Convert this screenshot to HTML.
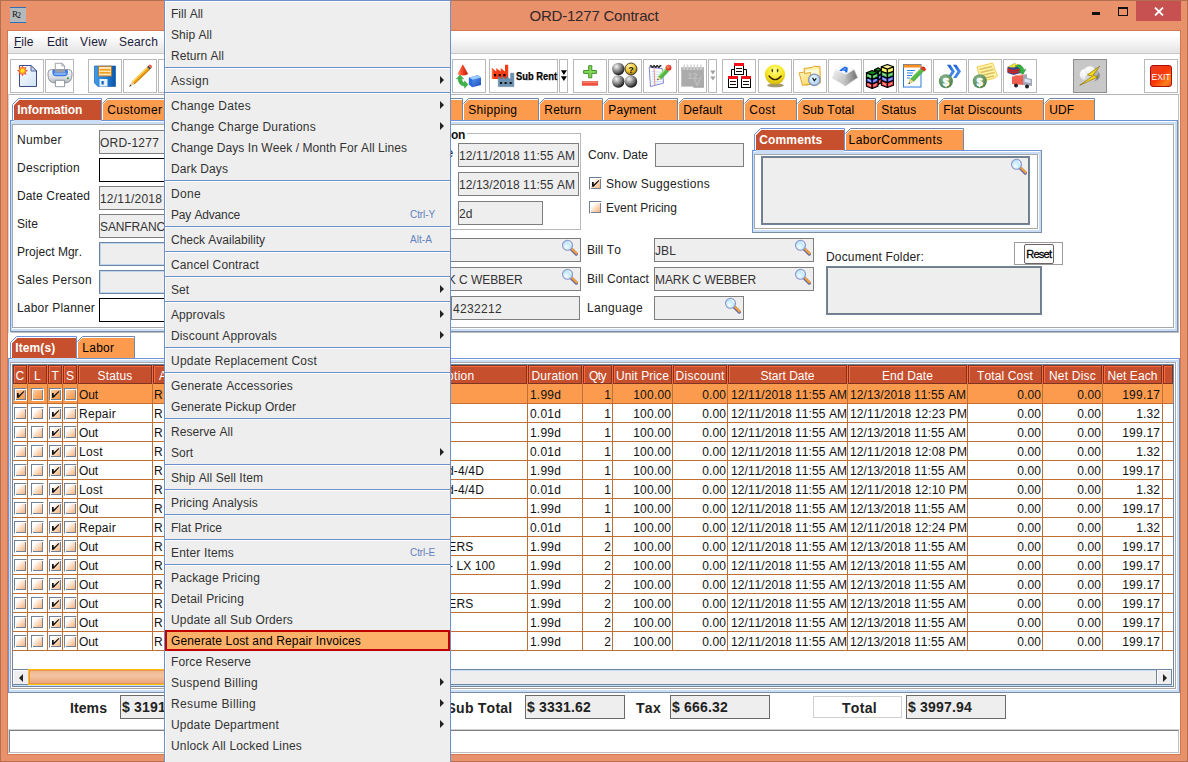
<!DOCTYPE html><html><head><meta charset="utf-8"><title>ORD-1277 Contract</title><style>
*{box-sizing:border-box;margin:0;padding:0}
html,body{width:1188px;height:762px;overflow:hidden}
body{position:relative;background:#E9916B;font:12px "Liberation Sans",sans-serif;font-kerning:none;color:#222}
.a{position:absolute}
.t{position:absolute;white-space:nowrap;line-height:14px;height:14px}
.b{font-weight:bold}
.fld{position:absolute;background:#EEEEEE;border:1px solid #7E7E7E;white-space:nowrap;overflow:hidden;line-height:14px;padding:5px 0 0 0;color:#333}
.fldw{position:absolute;background:#fff;border:1px solid #000}
.fldb{position:absolute;background:#EEEEEE;border:1px solid #6F859F;box-shadow:inset 0 0 0 1px #BDD6EF}
.tb{position:absolute;top:59px;height:34px;background:#fff;border:1px solid #B9B9B9}
.tab{position:absolute;height:21px;top:99px;background:#FB9A50;line-height:14px;padding:4px 0 0 7px;white-space:nowrap;color:#222;border-top:1px solid #B9CBE3;border-right:1px solid #B9CBE3;}
.mi{position:absolute;left:171px;white-space:nowrap;line-height:14px;height:14px;color:#333}
.sep{position:absolute;left:165px;width:285px;height:1px;background:#6F8FCB}
.arr{position:absolute;left:440px;width:0;height:0;border-left:4px solid #222;border-top:4px solid transparent;border-bottom:4px solid transparent}
.acc{position:absolute;font-size:10px;color:#6382BF;white-space:nowrap;line-height:12px}
.th{position:absolute;top:365px;height:19px;background:#C6502E;color:#fff;text-align:center;line-height:14px;padding-top:3px;white-space:nowrap;overflow:hidden;border:1px solid #7E3420;box-shadow:inset 1px 1px 0 #FF6A3C}
.td{position:absolute;white-space:nowrap;line-height:14px;height:14px;color:#111}
.cb{position:absolute;width:13px;height:13px;border:1px solid #6F8199;border-right-color:#fff;border-bottom-color:#fff;box-shadow:inset 1px 1px 0 #fff,inset -1px -1px 0 #6F8199;background:linear-gradient(135deg,#fff 0%,#fff 25%,#FBD5B5 60%,#F4A76C 100%)}
.cb.s{background:linear-gradient(135deg,#FCD8B8 0%,#FBB070 50%,#F58E34 100%)}
</style></head><body>
<div class="a" style="left:0px;top:0px;width:1188px;height:762px;border:1px solid #B46F4F"></div>
<div class="a" style="left:10px;top:7px;width:16px;height:16px;background:#B6B9BC;border-top:1px solid #2F6FB5;border-bottom:1px solid #2F6FB5;font:9px Liberation Serif,serif;line-height:12px;color:#111;padding-left:2px;white-space:nowrap">R<span style="font-size:8px;position:relative;top:1px;left:-1px">2</span></div>
<div class="t" style="left:0px;top:7px;width:1188px;text-align:center;font-size:15px;line-height:18px;height:18px;color:#33282A;letter-spacing:-.2px">ORD-1277 Contract</div>
<div class="a" style="left:1092px;top:12px;width:8px;height:3px;background:#111"></div>
<div class="a" style="left:1118px;top:7px;width:10px;height:9px;border:1px solid #111;border-top:2px solid #111"></div>
<div class="a" style="left:1136px;top:1px;width:45px;height:20px;background:#C75050"></div>
<svg class="a" style="left:1154px;top:7px" width="10" height="9" viewBox="0 0 10 9"><path d="M1 0.5 L9 8.5 M9 0.5 L1 8.5" stroke="#fff" stroke-width="1.8" fill="none"/></svg>
<div class="a" style="left:7px;top:30px;width:1174px;height:725px;background:#D27850"></div>
<div class="a" style="left:8px;top:31px;width:1172px;height:723px;background:#fff"></div>
<div class="a" style="left:8px;top:31px;width:1172px;height:23px;background:linear-gradient(#fff 0%,#fff 20%,#E4E4E4 100%);border-bottom:1px solid #C8C8C8"></div>
<div class="t" style="left:14px;top:35px;color:#1B1B3A"><span style="text-decoration:underline">F</span>ile</div>
<div class="t" style="left:47px;top:35px;letter-spacing:0.081px;color:#1B1B3A">Edit</div>
<div class="t" style="left:80px;top:35px;letter-spacing:0.247px;color:#1B1B3A">View</div>
<div class="t" style="left:119px;top:35px;letter-spacing:0.163px;color:#1B1B3A">Search</div>
<div class="a" style="left:8px;top:54px;width:1172px;height:42px;background:#fff"></div>
<svg width="0" height="0" style="position:absolute"><defs>
<linearGradient id="gPage" x1="0" y1="0" x2="1" y2="1"><stop offset="0" stop-color="#fff"/><stop offset="1" stop-color="#CFE2F7"/></linearGradient>
<radialGradient id="gSun"><stop offset="0" stop-color="#FFE030"/><stop offset=".45" stop-color="#FFB020"/><stop offset=".75" stop-color="#F04030"/><stop offset="1" stop-color="#F04030" stop-opacity="0"/></radialGradient>
<linearGradient id="gFlop" x1="0" y1="0" x2="1" y2="0"><stop offset="0" stop-color="#3C9BE8"/><stop offset=".6" stop-color="#1E78D0"/><stop offset="1" stop-color="#0A56A8"/></linearGradient>
<radialGradient id="gBall" cx=".35" cy=".3" r=".75"><stop offset="0" stop-color="#F4F4F4"/><stop offset=".3" stop-color="#B4B4B4"/><stop offset=".7" stop-color="#5A5A5A"/><stop offset="1" stop-color="#0A0A0A"/></radialGradient>
<radialGradient id="gBallY" cx=".4" cy=".3" r=".8"><stop offset="0" stop-color="#FFF6B0"/><stop offset=".5" stop-color="#F2C530"/><stop offset="1" stop-color="#6A4A00"/></radialGradient>
<radialGradient id="gSmile" cx=".5" cy=".3" r=".78"><stop offset="0" stop-color="#FFFF90"/><stop offset=".55" stop-color="#F6E41C"/><stop offset=".85" stop-color="#D4B80C"/><stop offset="1" stop-color="#7A6000"/></radialGradient>
<radialGradient id="gDol" cx=".4" cy=".3" r=".8"><stop offset="0" stop-color="#8DB58A"/><stop offset="1" stop-color="#3F7A42"/></radialGradient>
<linearGradient id="gExit" x1="0" y1="0" x2="1" y2="1"><stop offset="0" stop-color="#E8402A"/><stop offset=".5" stop-color="#F83808"/><stop offset=".8" stop-color="#FF8018"/><stop offset="1" stop-color="#E84020"/></linearGradient>
<linearGradient id="gCube" x1="0" y1="0" x2="1" y2="1"><stop offset="0" stop-color="#6CB0F8"/><stop offset="1" stop-color="#1848C0"/></linearGradient>
<linearGradient id="gCone" x1="0" y1="0" x2="1" y2="0"><stop offset="0" stop-color="#FF9070"/><stop offset=".5" stop-color="#F04020"/><stop offset="1" stop-color="#C02010"/></linearGradient>
<linearGradient id="gKey" x1="0" y1="0" x2="0" y2="1"><stop offset="0" stop-color="#F4F4F4"/><stop offset="1" stop-color="#B0B0B0"/></linearGradient>
<linearGradient id="gFold" x1="0" y1="0" x2="1" y2="1"><stop offset="0" stop-color="#FFF6C0"/><stop offset="1" stop-color="#F8D258"/></linearGradient>
<linearGradient id="gArr" x1="0" y1="0" x2="1" y2="1"><stop offset="0" stop-color="#1458D8"/><stop offset="1" stop-color="#58A0F4"/></linearGradient>
<linearGradient id="gKeyL" x1="0" y1="0" x2="1" y2="1"><stop offset="0" stop-color="#F2F2F2"/><stop offset="1" stop-color="#B8B8B8"/></linearGradient><linearGradient id="gKeyR" x1="0" y1="0" x2="1" y2="0"><stop offset="0" stop-color="#C4C4C4"/><stop offset="1" stop-color="#6C6C6C"/></linearGradient>
<radialGradient id="gLens" cx=".38" cy=".68" r=".7"><stop offset="0" stop-color="#F4FDFF"/><stop offset=".6" stop-color="#C4EAFB"/><stop offset="1" stop-color="#A8D8F6"/></radialGradient>
<radialGradient id="gEra" cx=".4" cy=".35" r=".7"><stop offset="0" stop-color="#FF8A70"/><stop offset="1" stop-color="#D01808"/></radialGradient>
<radialGradient id="gCloud" cx=".35" cy=".3" r=".8"><stop offset="0" stop-color="#fff"/><stop offset=".6" stop-color="#EFEFEF"/><stop offset="1" stop-color="#C8C8C8"/></radialGradient>
<radialGradient id="gClk" cx=".4" cy=".35" r=".7"><stop offset="0" stop-color="#E8F6FF"/><stop offset="1" stop-color="#A8D0F4"/></radialGradient>
<linearGradient id="gPrn" x1="0" y1="0" x2="0" y2="1"><stop offset="0" stop-color="#F4F6F8"/><stop offset=".6" stop-color="#DADDE2"/><stop offset="1" stop-color="#AEB3BC"/></linearGradient>
<linearGradient id="gPen" x1="0" y1="0" x2="1" y2="1"><stop offset="0" stop-color="#8FE070"/><stop offset="1" stop-color="#209020"/></linearGradient>
</defs></svg>
<div class="tb" style="left:10px;width:34px;background:#fff"></div>
<svg class="a" style="left:10px;top:59px" width="34" height="34" viewBox="0 0 34 34"><path d="M9.500 6.500H21L26.500 12V27.500H9.500Z" fill="url(#gPage)" stroke="#3A4C86" stroke-width="1"/><path d="M21 6.500V12H26.500Z" fill="#C4D8F0" stroke="#3A4C86" stroke-width=".8"/><path d="M18.10 11.80L15.64 13.10L16.46 15.76L13.80 14.94L12.50 17.40L11.20 14.94L8.54 15.76L9.36 13.10L6.90 11.80L9.36 10.50L8.54 7.84L11.20 8.66L12.50 6.20L13.80 8.66L16.46 7.84L15.64 10.50Z" fill="#F0402C" opacity=".9"/><circle cx="12.5" cy="11.8" r="3.3" fill="#FF9820"/><circle cx="12.5" cy="11.8" r="2" fill="#FFE428"/></svg>
<div class="tb" style="left:45px;width:29px;background:#fff"></div>
<svg class="a" style="left:45px;top:59px" width="29" height="34" viewBox="0 0 29 34"><path d="M10.300 12V4.300H16.800L19.600 7V12Z" fill="#fff" stroke="#8A8E96" stroke-width=".8"/><path d="M16.800 4.300V7H19.600Z" fill="#D8DCE2" stroke="#8A8E96" stroke-width=".6"/><path d="M6.500 10.500H23.500Q27 10.500 27 14V16Q27 24 19.500 24H10.500Q3 24 3 16V14Q3 10.500 6.500 10.500Z" fill="url(#gPrn)" stroke="#7C828C" stroke-width=".8"/><path d="M7.400 11H22.900V13.500Q22.900 17.300 19 17.300H11.300Q7.400 17.300 7.400 13.500Z" fill="#3C7CE4"/><path d="M9 13.800H21.300V14.500Q21.300 16 19.500 16H11Q9 16 9 14.500Z" fill="#7FB0F4"/><path d="M10 11H20V13.500H10Z" fill="#9AA0AC"/><path d="M10.400 21.300H19.600V27.700H10.400Z" fill="#fff" stroke="#7C828C" stroke-width=".8"/><circle cx="22.900" cy="19.200" r="1" fill="#22A022"/></svg>
<div class="tb" style="left:88px;width:34px;background:#fff"></div>
<svg class="a" style="left:88px;top:59px" width="34" height="34" viewBox="0 0 34 34"><path d="M6.500 7H27.500V27.5H10L6.500 24Z" fill="url(#gFlop)" stroke="#0C4FA0" stroke-width=".6"/><rect x="10.5" y="7.300" width="13" height="9.700" fill="#FCE6B8" stroke="#B87830" stroke-width="1"/><rect x="11.5" y="10" width="11" height="1.600" fill="#F0A020"/><rect x="11.5" y="13" width="11" height="1.600" fill="#F0A020"/><rect x="11.500" y="20" width="8" height="7.500" fill="#E8F0FA"/><rect x="13.5" y="22" width="2.200" height="3.500" fill="#1060C0"/></svg>
<div class="tb" style="left:123px;width:34px;background:#fff"></div>
<svg class="a" style="left:123px;top:59px" width="34" height="34" viewBox="0 0 34 34"><path d="M11.490 25.270L8.850 22.530L24.080 7.900L26.720 10.640Z" fill="#F5A51A"/><path d="M8.850 22.530L24.080 7.900L25 8.850L9.770 23.480Z" fill="#FFD968"/><path d="M10.700 24.450L25.930 9.820L26.720 10.640L11.490 25.270Z" fill="#D48410"/><path d="M6.200 27.700L8.850 22.530L11.490 25.270Z" fill="#E6CDA6"/><path d="M6.200 27.700L7.300 25.500L8.500 26.700Z" fill="#2A2A2A"/><path d="M24.080 7.900L25.500 6.500L28.140 9.240L26.720 10.640Z" fill="#4A4A4A"/><path d="M25.500 6.500L26.500 5.600Q28.800 5.200 29.300 8.200L28.140 9.240Z" fill="#EE6048"/></svg>
<div class="tb" style="left:158px;width:34px;background:#fff"></div>
<div class="tb" style="left:452px;width:34px;background:#fff"></div>
<svg class="a" style="left:452px;top:59px" width="34" height="34" viewBox="0 0 34 34"><path d="M10.800 5.300L16.200 15Q11 18 5.400 15Z" fill="url(#gCone)"/><path d="M6 19.500Q6 26 12.500 27.300V29.300L16 25.500L12.500 21.800V23.800Q9.500 23 9.800 19.500L11.800 20L8 16L4.200 20Z" fill="#3DB24A" stroke="#2A8A35" stroke-width=".4"/><path d="M16.900 18.500L26 15.900L29 18.500V26L20.500 28.300L16.900 25.500Z" fill="url(#gCube)"/><path d="M16.900 18.500L26 15.900L29 18.500L20.500 20.800Z" fill="#9CCCFF"/><path d="M16.900 18.500L20.500 20.800V28.300L16.900 25.500Z" fill="#2C6CE0"/></svg>
<div class="tb" style="left:489px;width:69px;background:#fff"></div>
<svg class="a" style="left:489px;top:59px" width="69" height="34" viewBox="0 0 69 34"><path d="M2.900 19.900V9L7.300 12.500V9L11.700 12.500V9L16 12.500V5.700H19.200V19.900Z" fill="#F43C14"/><path d="M2.900 19.900V9L4.500 10.300V19.900Z" fill="#FF6A40"/><path d="M5 15h2.100v2.300h-2.100zM9.600 15h2.100v2.300h-2.100zM14.200 15h2.300v2.300h-2.300z" fill="#1A0000"/><path d="M9.300 27.600V17.500L13.400 20.500V17.500L17.500 20.500V17.500L21.600 20.500V14.200H24.800V27.600Z" fill="#6C92B2" stroke="#4F7696" stroke-width=".5"/><path d="M11 23h2.100v2.100h-2.100zM15.600 23h2.100v2.100h-2.100zM20.600 23h2.100v2.100h-2.100z" fill="#0A0A0A"/></svg>
<div class="t b" style="left:515.5px;top:69.300px;font-size:10.5px;color:#000;transform:scaleX(.89);transform-origin:0 0;-webkit-text-stroke:.25px #000">Sub Rent</div>
<div class="tb" style="left:559px;width:9px;background:#fff"></div>
<svg class="a" style="left:559px;top:59px" width="9" height="34" viewBox="0 0 9 34"><path d="M1.900 11.200H7.900L4.900 15.900Z" fill="#000"/><path d="M1.900 17.200H7.900L4.900 21.900Z" fill="#000"/></svg>
<div class="tb" style="left:573px;width:34px;background:#fff"></div>
<svg class="a" style="left:573px;top:59px" width="34" height="34" viewBox="0 0 34 34"><path d="M15.700 6.700H18.800V11.500H23.400V14.400H18.800V18.800H15.700V14.400H10.600V11.500H15.700Z" fill="#86D658" stroke="#2E8B1E" stroke-width=".9"/><rect x="9.200" y="22.500" width="15.600" height="3.800" fill="#F0503C" stroke="#D83828" stroke-width=".5"/><rect x="9.500" y="22.800" width="15" height="1.200" fill="#F8806C"/></svg>
<div class="tb" style="left:608px;width:34px;background:#fff"></div>
<svg class="a" style="left:608px;top:59px" width="34" height="34" viewBox="0 0 34 34"><circle cx="10.300" cy="22.500" r="6.200" fill="url(#gBall)"/><circle cx="23" cy="22.500" r="6.200" fill="url(#gBall)"/><circle cx="10.300" cy="10" r="6.200" fill="url(#gBall)"/><circle cx="23" cy="10" r="6" fill="url(#gBallY)" stroke="#222" stroke-width=".8"/><text x="23" y="13.500" font-family="Liberation Sans,sans-serif" font-size="9" font-weight="bold" text-anchor="middle" fill="#111">?</text></svg>
<div class="tb" style="left:643px;width:34px;background:#fff"></div>
<svg class="a" style="left:643px;top:59px" width="34" height="34" viewBox="0 0 34 34"><path d="M6.200 8.200L19.200 9.600L20.600 24.100L7.500 27.600Z" fill="#fff" stroke="#8484D4" stroke-width="1"/><path d="M8.200 12.500L19.500 13.300M8.400 15L19.800 15.700M8.600 17.500L20 18.100M8.800 20L20.200 20.400M9 22.500L20.300 22.600M9.200 25L16 23.800" stroke="#B4D4F6" stroke-width=".7"/><path d="M11 9L11.900 26.200" stroke="#F08080" stroke-width=".9"/><path d="M7 7.400q.8 -1.600 1.600 0q.8 2 1.600 0q.8 -1.600 1.600 0q.8 2 1.600 0q.8 -1.600 1.600 0q.8 2 1.600 0q.8 -1.600 1.600 0" stroke="#222" stroke-width="1.300" fill="none"/><path d="M14.200 21.300L15.200 17.200L23.300 8.600L26.600 11.800L18.300 20.300Z" fill="url(#gPen)"/><path d="M16.300 16.200L23.800 8.300" stroke="#A8F088" stroke-width="1.300"/><path d="M14.200 21.300L15.200 17.200L18.300 20.300Z" fill="#EED6A6"/><path d="M14.200 21.300L14.600 19.700L15.800 20.800Z" fill="#333"/><path d="M22.600 9.300L23.600 8.300L26.900 11.500L25.900 12.500Z" fill="#F2F2F2"/><circle cx="25.500" cy="8.700" r="2.900" fill="url(#gEra)"/></svg>
<div class="tb" style="left:678px;width:29px;background:#fff"></div>
<svg class="a" style="left:678px;top:59px" width="29" height="34" viewBox="0 0 29 34"><path d="M15.300 16.700H25.900V28.700H15.300Z" fill="#9C9C9C"/><path d="M3.300 8.400H25.900V27.600H3.300Z" fill="#ABABAB"/><path d="M3.300 8.400H25.900V11H3.300Z" fill="#B6B6B6"/><text x="14.800" y="20" font-family="Liberation Sans,sans-serif" font-size="8.500" font-weight="bold" text-anchor="middle" fill="#C2C2C2" letter-spacing=".5">12</text><path d="M6.300 5.900v4.500M9.600 5.900v4.500M12.900 5.900v4.500M16.200 5.900v4.500M19.500 5.900v4.500M22.800 5.900v4.500" stroke="#D2D2D2" stroke-width="1.500" stroke-linecap="round"/><path d="M16.500 20.500L19.300 26.300L23.300 17.500" stroke="#BDBDBD" stroke-width="1.500" fill="none"/></svg>
<div class="tb" style="left:708px;width:9px;background:#fff"></div>
<svg class="a" style="left:708px;top:59px" width="9" height="34" viewBox="0 0 9 34"><path d="M2.200 11.400H7.600L4.900 15.600Z" fill="#A0A0A0"/><path d="M2.200 17.400H7.600L4.900 21.600Z" fill="#A0A0A0"/></svg>
<div class="tb" style="left:722px;width:34px;background:#fff"></div>
<svg class="a" style="left:722px;top:59px" width="34" height="34" viewBox="0 0 34 34"><path d="M9.500 17.500V10.500H24.500V17.500" stroke="#000" stroke-width="1" fill="none"/><rect x="12.5" y="4.5" width="9" height="11" fill="#fff" stroke="#000" stroke-width="1"/><rect x="12.0" y="4.0" width="10" height="3" fill="#F0101C"/><path d="M14.0 9.5h6M14.0 12.5h6" stroke="#1A0A0A" stroke-width="1"/><rect x="6.5" y="17.5" width="9" height="11" fill="#fff" stroke="#000" stroke-width="1"/><rect x="6.0" y="17.0" width="10" height="3" fill="#F0101C"/><path d="M8.0 22.5h6M8.0 25.5h6" stroke="#1A0A0A" stroke-width="1"/><rect x="19.5" y="17.5" width="9" height="11" fill="#fff" stroke="#000" stroke-width="1"/><rect x="19.0" y="17.0" width="10" height="3" fill="#F0101C"/><path d="M21.0 22.5h6M21.0 25.5h6" stroke="#1A0A0A" stroke-width="1"/></svg>
<div class="tb" style="left:758px;width:34px;background:#fff"></div>
<svg class="a" style="left:758px;top:59px" width="34" height="34" viewBox="0 0 34 34"><ellipse cx="17.500" cy="26.300" rx="8.500" ry="2" fill="#5A4400" opacity=".55"/><circle cx="17" cy="15.600" r="10.100" fill="url(#gSmile)"/><ellipse cx="14.300" cy="11.600" rx=".8" ry="1.800" fill="#4A4000"/><ellipse cx="19.600" cy="11.600" rx=".8" ry="1.800" fill="#4A4000"/><path d="M11 17Q17.100 24.300 23.200 17" stroke="#3A2400" stroke-width="1.300" fill="none" stroke-linecap="round"/></svg>
<div class="tb" style="left:793px;width:34px;background:#fff"></div>
<svg class="a" style="left:793px;top:59px" width="34" height="34" viewBox="0 0 34 34"><path d="M11 9.500L19.500 8.300L20.500 7.200L27 7.600L27.400 24L12.500 26Z" fill="#FFEFA0" stroke="#E09A20" stroke-width=".9" stroke-linejoin="round"/><path d="M13 11L25.500 10L26 23L14 24.500Z" fill="#FFFBDC"/><path d="M6.200 13.800L10.500 13.200L12 14.500L17.500 13.500L19 25L9.400 26.300Z" fill="url(#gFold)" stroke="#E09A20" stroke-width=".9" stroke-linejoin="round"/><circle cx="21.300" cy="20.800" r="5.700" fill="url(#gClk)" stroke="#8494B8" stroke-width="1.300"/><path d="M19.600 18.900L21.300 21.700L23.300 19.400" stroke="#101018" stroke-width="1.200" fill="none"/></svg>
<div class="tb" style="left:828px;width:34px;background:#fff"></div>
<svg class="a" style="left:828px;top:59px" width="34" height="34" viewBox="0 0 34 34"><path d="M7.700 10.900L18.300 15L17.100 26.800L4.400 19.200Z" fill="url(#gKeyL)" stroke="#E4E4E4" stroke-width=".8" stroke-linejoin="round"/><path d="M18.300 15L25.900 10.500L29.500 18.600L17.100 26.800Z" fill="url(#gKeyR)" stroke="#B0B0B0" stroke-width=".8" stroke-linejoin="round"/><path d="M7.700 10.900L15.600 6.900L25.900 10.500L18.300 15Z" fill="#FBFBFB" stroke="#F0F0F0" stroke-width=".8" stroke-linejoin="round"/><path d="M11 11.400L16.800 7.600L19.800 8.800L19.300 13.600L16.900 13.200L17.200 11.900L14.600 11.500L13.300 12.200Z" fill="#1E6AE8"/><path d="M15.400 10.300L17.300 9.200L17.300 10.600Z" fill="#FBFBFB"/></svg>
<div class="tb" style="left:863px;width:34px;background:#fff"></div>
<svg class="a" style="left:863px;top:59px" width="34" height="34" viewBox="0 0 34 34"><path d="M11.5 10.700000000000001L15.05 12.600000000000001V16.900000000000002L11.5 15.0Z" fill="#38B048" stroke="#000" stroke-width="1.100" stroke-linejoin="round"/><path d="M18.6 10.700000000000001L15.05 12.600000000000001V16.900000000000002L18.6 15.0Z" fill="#38B048" stroke="#000" stroke-width="1.100" stroke-linejoin="round"/><path d="M12.8 12.3L13.850000000000001 14.000000000000002V15.300000000000002L12.8 13.6Z" fill="#fff" opacity=".55"/><path d="M17.3 12.3L16.25 14.000000000000002V15.300000000000002L17.3 13.6Z" fill="#fff" opacity=".45"/><path d="M11.5 15.0L15.05 16.9V21.2L11.5 19.3Z" fill="#4858F0" stroke="#000" stroke-width="1.100" stroke-linejoin="round"/><path d="M18.6 15.0L15.05 16.9V21.2L18.6 19.3Z" fill="#4858F0" stroke="#000" stroke-width="1.100" stroke-linejoin="round"/><path d="M12.8 16.6L13.850000000000001 18.299999999999997V19.599999999999998L12.8 17.900000000000002Z" fill="#fff" opacity=".55"/><path d="M17.3 16.6L16.25 18.299999999999997V19.599999999999998L17.3 17.900000000000002Z" fill="#fff" opacity=".45"/><path d="M11.5 19.3L15.05 21.2V25.5L11.5 23.6Z" fill="#F03838" stroke="#000" stroke-width="1.100" stroke-linejoin="round"/><path d="M18.6 19.3L15.05 21.2V25.5L18.6 23.6Z" fill="#F03838" stroke="#000" stroke-width="1.100" stroke-linejoin="round"/><path d="M12.8 20.900000000000002L13.850000000000001 22.599999999999998V23.9L12.8 22.200000000000003Z" fill="#fff" opacity=".55"/><path d="M17.3 20.900000000000002L16.25 22.599999999999998V23.9L17.3 22.200000000000003Z" fill="#fff" opacity=".45"/><path d="M11.5 10.700000000000001L15.05 8.8L18.6 10.700000000000001L15.05 12.600000000000001Z" fill="#108018" stroke="#000" stroke-width="1.100" stroke-linejoin="round"/><path d="M18.3 7.8L24.4 10.0V14.6L18.3 12.399999999999999Z" fill="#F0E838" stroke="#000" stroke-width="1.100" stroke-linejoin="round"/><path d="M30.5 7.8L24.4 10.0V14.6L30.5 12.399999999999999Z" fill="#F0E838" stroke="#000" stroke-width="1.100" stroke-linejoin="round"/><path d="M19.6 9.4L23.2 11.4V13.0L19.6 10.999999999999998Z" fill="#fff" opacity=".55"/><path d="M29.2 9.4L25.599999999999998 11.4V13.0L29.2 10.999999999999998Z" fill="#fff" opacity=".45"/><path d="M18.3 12.399999999999999L24.4 14.599999999999998V19.199999999999996L18.3 17.0Z" fill="#38B048" stroke="#000" stroke-width="1.100" stroke-linejoin="round"/><path d="M30.5 12.399999999999999L24.4 14.599999999999998V19.199999999999996L30.5 17.0Z" fill="#38B048" stroke="#000" stroke-width="1.100" stroke-linejoin="round"/><path d="M19.6 13.999999999999998L23.2 15.999999999999998V17.599999999999994L19.6 15.6Z" fill="#fff" opacity=".55"/><path d="M29.2 13.999999999999998L25.599999999999998 15.999999999999998V17.599999999999994L29.2 15.6Z" fill="#fff" opacity=".45"/><path d="M18.3 17.0L24.4 19.2V23.799999999999997L18.3 21.6Z" fill="#4858F0" stroke="#000" stroke-width="1.100" stroke-linejoin="round"/><path d="M30.5 17.0L24.4 19.2V23.799999999999997L30.5 21.6Z" fill="#4858F0" stroke="#000" stroke-width="1.100" stroke-linejoin="round"/><path d="M19.6 18.6L23.2 20.599999999999998V22.199999999999996L19.6 20.200000000000003Z" fill="#fff" opacity=".55"/><path d="M29.2 18.6L25.599999999999998 20.599999999999998V22.199999999999996L29.2 20.200000000000003Z" fill="#fff" opacity=".45"/><path d="M18.3 21.599999999999998L24.4 23.799999999999997V28.4L18.3 26.199999999999996Z" fill="#F03838" stroke="#000" stroke-width="1.100" stroke-linejoin="round"/><path d="M30.5 21.599999999999998L24.4 23.799999999999997V28.4L30.5 26.199999999999996Z" fill="#F03838" stroke="#000" stroke-width="1.100" stroke-linejoin="round"/><path d="M19.6 23.2L23.2 25.199999999999996V26.799999999999997L19.6 24.799999999999997Z" fill="#fff" opacity=".55"/><path d="M29.2 23.2L25.599999999999998 25.199999999999996V26.799999999999997L29.2 24.799999999999997Z" fill="#fff" opacity=".45"/><path d="M18.3 7.8L24.4 5.6L30.5 7.8L24.4 10.0Z" fill="#F4F090" stroke="#000" stroke-width="1.100" stroke-linejoin="round"/><path d="M3.4 13.7L9.2 15.899999999999999V20.4L3.4 18.2Z" fill="#38B048" stroke="#000" stroke-width="1.100" stroke-linejoin="round"/><path d="M15 13.7L9.2 15.899999999999999V20.4L15 18.2Z" fill="#38B048" stroke="#000" stroke-width="1.100" stroke-linejoin="round"/><path d="M4.7 15.299999999999999L7.999999999999999 17.299999999999997V18.799999999999997L4.7 16.8Z" fill="#fff" opacity=".55"/><path d="M13.7 15.299999999999999L10.399999999999999 17.299999999999997V18.799999999999997L13.7 16.8Z" fill="#fff" opacity=".45"/><path d="M3.4 18.2L9.2 20.4V24.9L3.4 22.7Z" fill="#4858F0" stroke="#000" stroke-width="1.100" stroke-linejoin="round"/><path d="M15 18.2L9.2 20.4V24.9L15 22.7Z" fill="#4858F0" stroke="#000" stroke-width="1.100" stroke-linejoin="round"/><path d="M4.7 19.8L7.999999999999999 21.799999999999997V23.299999999999997L4.7 21.3Z" fill="#fff" opacity=".55"/><path d="M13.7 19.8L10.399999999999999 21.799999999999997V23.299999999999997L13.7 21.3Z" fill="#fff" opacity=".45"/><path d="M3.4 22.7L9.2 24.9V29.4L3.4 27.2Z" fill="#F03838" stroke="#000" stroke-width="1.100" stroke-linejoin="round"/><path d="M15 22.7L9.2 24.9V29.4L15 27.2Z" fill="#F03838" stroke="#000" stroke-width="1.100" stroke-linejoin="round"/><path d="M4.7 24.3L7.999999999999999 26.299999999999997V27.799999999999997L4.7 25.8Z" fill="#fff" opacity=".55"/><path d="M13.7 24.3L10.399999999999999 26.299999999999997V27.799999999999997L13.7 25.8Z" fill="#fff" opacity=".45"/><path d="M3.4 13.7L9.2 11.5L15 13.7L9.2 15.9Z" fill="#108018" stroke="#000" stroke-width="1.100" stroke-linejoin="round"/></svg>
<div class="tb" style="left:898px;width:34px;background:#fff"></div>
<svg class="a" style="left:898px;top:59px" width="34" height="34" viewBox="0 0 34 34"><rect x="5.500" y="5.500" width="17.500" height="22.500" fill="#fff" stroke="#2878D8" stroke-width="1"/><rect x="5.500" y="5.500" width="17.500" height="3" fill="#FF9020"/><path d="M9 11.500h8M9 14h6M9 16.500h5M9 19h3" stroke="#3080E0" stroke-width="1"/><path d="M10.500 25L12 20L23.500 8.500Q26.500 7.500 27.500 10.500L16 22.500Z" fill="url(#gPen)"/><path d="M10.500 25L12 20L16 22.500Z" fill="#F0D090"/><path d="M10.500 25L11 23.200L12.300 24.200Z" fill="#111"/><path d="M22.500 9.500L23.500 8Q27 6.500 28 10.500L26.500 12.500Z" fill="#E03020"/></svg>
<div class="tb" style="left:933px;width:34px;background:#fff"></div>
<svg class="a" style="left:933px;top:59px" width="34" height="34" viewBox="0 0 34 34"><path d="M14 5.700H17.500L22 12.400L17.500 19H14L18.500 12.400Z" fill="url(#gArr)"/><path d="M20 5.700H23.500L28 12.400L23.500 19H20L24.500 12.400Z" fill="url(#gArr)"/><circle cx="12.900" cy="22.300" r="7" fill="url(#gDol)"/><text x="12.900" y="26.600" font-family="Liberation Sans,sans-serif" font-size="11.500" font-weight="bold" text-anchor="middle" fill="#fff" stroke="#fff" stroke-width=".5">$</text></svg>
<div class="tb" style="left:968px;width:34px;background:#fff"></div>
<svg class="a" style="left:968px;top:59px" width="34" height="34" viewBox="0 0 34 34"><path d="M9 8L24.500 4L29.500 17L26 19.500L13 22.500Z" fill="#FFF4A8" stroke="#F0C030" stroke-width=".8"/><path d="M11.500 10.500L24 7.500M12.500 13.500L25.500 10.500M13.500 16.500L26.500 13.500M14.500 19.500L26 17" stroke="#DCC060" stroke-width="1.300"/><circle cx="11.800" cy="22.300" r="7" fill="url(#gDol)"/><text x="11.800" y="26.600" font-family="Liberation Sans,sans-serif" font-size="11.500" font-weight="bold" text-anchor="middle" fill="#fff" stroke="#fff" stroke-width=".5">$</text></svg>
<div class="tb" style="left:1003px;width:34px;background:#fff"></div>
<svg class="a" style="left:1003px;top:59px" width="34" height="34" viewBox="0 0 34 34"><path d="M4.500 8L11 4.500L18 6V14L10.500 16L4.500 14Z" fill="#384888"/><path d="M4.500 8L11 4.500L18 6L11 8.500Z" fill="#E8E040"/><path d="M4.500 10L10.500 12L18 10M4.500 12L10.500 14L18 12" stroke="#D02020" stroke-width="1.500" fill="none"/><path d="M12 7Q19 4 21 11L23 10L20 15.500L15.500 12.500L17.500 12Q16.500 8 12 7Z" fill="#30B040" stroke="#208030" stroke-width=".4"/><path d="M9 17.500L20 16V26L9 25Z" fill="#F06050"/><path d="M9 17.500L13 16L24 15L20 16Z" fill="#F89080"/><path d="M20 16L24 15V19L29 20V27L20 26Z" fill="#A0A8B8"/><path d="M21.500 19.500L27.500 21V24L21.500 23Z" fill="#D8E4F4"/><circle cx="13" cy="26.500" r="2" fill="#222"/><circle cx="24" cy="27.500" r="2" fill="#222"/></svg>
<div class="tb" style="left:1073px;width:34px;background:#C8C8C8;border-color:#8C8C8C"></div>
<svg class="a" style="left:1073px;top:59px" width="34" height="34" viewBox="0 0 34 34"><ellipse cx="19" cy="16.500" rx="8" ry="6" fill="#8E8E8E"/><ellipse cx="20.500" cy="13" rx="5" ry="4.500" fill="#B0B0B0"/><ellipse cx="13" cy="15.500" rx="6.300" ry="6" fill="url(#gCloud)"/><ellipse cx="17" cy="11.500" rx="5.500" ry="4.300" fill="url(#gCloud)"/><ellipse cx="17.500" cy="19" rx="5.500" ry="3.800" fill="#D4D4D4"/><path d="M26.700 7.200L14.500 15.800L19.500 17.200L6.700 26.300L25 18L20 16.300Z" fill="#F8D818" stroke="#7A6400" stroke-width=".6" stroke-linejoin="round"/></svg>
<div class="tb" style="left:1144px;width:34px;background:#fff"></div>
<svg class="a" style="left:1144px;top:59px" width="34" height="34" viewBox="0 0 34 34"><rect x="6.500" y="6.500" width="21" height="21" rx="2.500" fill="url(#gExit)" stroke="#A81010" stroke-width="1"/><text x="17" y="21" font-family="Liberation Sans,sans-serif" font-size="9.500" text-anchor="middle" fill="#fff" textLength="19" lengthAdjust="spacingAndGlyphs">EXIT</text></svg>
<div class="a" style="left:8px;top:94px;width:1171px;height:1px;background:#B4B4B4"></div>
<div class="a" style="left:1178px;top:94px;width:1px;height:239px;background:#BEBEBE"></div>
<div class="a" style="left:1179px;top:54px;width:1px;height:41px;background:#ECECEC"></div>
<div class="a" style="left:8px;top:94px;width:1px;height:239px;background:#D4D4D4"></div>
<svg class="a" style="left:12px;top:98px" width="90" height="23" viewBox="0 0 90 23"><path d="M0.5 23V6.5L6.5 0.5H89.5V23" fill="#fff" stroke="#6F93D6" stroke-width="1"/><path d="M2 22V7.300L7.300 2H89V22Z" fill="#C6502E"/></svg>
<div class="t" style="left:17.3px;top:103px;letter-spacing:-0.09px;color:#fff;font-weight:bold">Information</div>
<svg class="a" style="left:102px;top:98px" width="79" height="22" viewBox="0 0 79 22"><path d="M1 22V6.300L5.300 2H78V22Z" fill="#FC9A4E"/><path d="M0.5 5.500L5.500 0.500H78.5V22" fill="none" stroke="#7088A8" stroke-width="1"/></svg>
<div class="t" style="left:107.3px;top:103px;letter-spacing:0.374px;color:#000">Customer</div>
<svg class="a" style="left:400px;top:98px" width="63" height="22" viewBox="0 0 63 22"><path d="M1 22V6.300L5.300 2H62V22Z" fill="#FC9A4E"/><path d="M0.5 5.500L5.500 0.500H62.5V22" fill="none" stroke="#7088A8" stroke-width="1"/></svg>
<div class="t" style="left:405.3px;top:103px;letter-spacing:0px;color:#000"></div>
<svg class="a" style="left:463px;top:98px" width="76" height="22" viewBox="0 0 76 22"><path d="M1 22V6.300L5.300 2H75V22Z" fill="#FC9A4E"/><path d="M0.5 5.500L5.500 0.500H75.5V22" fill="none" stroke="#7088A8" stroke-width="1"/></svg>
<div class="t" style="left:468.3px;top:103px;letter-spacing:0.287px;color:#000">Shipping</div>
<svg class="a" style="left:539px;top:98px" width="64" height="22" viewBox="0 0 64 22"><path d="M1 22V6.300L5.300 2H63V22Z" fill="#FC9A4E"/><path d="M0.5 5.500L5.500 0.500H63.5V22" fill="none" stroke="#7088A8" stroke-width="1"/></svg>
<div class="t" style="left:544.3px;top:103px;letter-spacing:0.164px;color:#000">Return</div>
<svg class="a" style="left:603px;top:98px" width="75" height="22" viewBox="0 0 75 22"><path d="M1 22V6.300L5.300 2H74V22Z" fill="#FC9A4E"/><path d="M0.5 5.500L5.500 0.500H74.5V22" fill="none" stroke="#7088A8" stroke-width="1"/></svg>
<div class="t" style="left:608.3px;top:103px;letter-spacing:0.092px;color:#000">Payment</div>
<svg class="a" style="left:678px;top:98px" width="66" height="22" viewBox="0 0 66 22"><path d="M1 22V6.300L5.300 2H65V22Z" fill="#FC9A4E"/><path d="M0.5 5.500L5.500 0.500H65.5V22" fill="none" stroke="#7088A8" stroke-width="1"/></svg>
<div class="t" style="left:683.3px;top:103px;letter-spacing:0.14px;color:#000">Default</div>
<svg class="a" style="left:744px;top:98px" width="53" height="22" viewBox="0 0 53 22"><path d="M1 22V6.300L5.300 2H52V22Z" fill="#FC9A4E"/><path d="M0.5 5.500L5.500 0.500H52.5V22" fill="none" stroke="#7088A8" stroke-width="1"/></svg>
<div class="t" style="left:749.3px;top:103px;letter-spacing:0.332px;color:#000">Cost</div>
<svg class="a" style="left:797px;top:98px" width="79" height="22" viewBox="0 0 79 22"><path d="M1 22V6.300L5.300 2H78V22Z" fill="#FC9A4E"/><path d="M0.5 5.500L5.500 0.500H78.5V22" fill="none" stroke="#7088A8" stroke-width="1"/></svg>
<div class="t" style="left:802.3px;top:103px;letter-spacing:0.071px;color:#000">Sub Total</div>
<svg class="a" style="left:876px;top:98px" width="62" height="22" viewBox="0 0 62 22"><path d="M1 22V6.300L5.300 2H61V22Z" fill="#FC9A4E"/><path d="M0.5 5.500L5.500 0.500H61.5V22" fill="none" stroke="#7088A8" stroke-width="1"/></svg>
<div class="t" style="left:881.3px;top:103px;letter-spacing:0.164px;color:#000">Status</div>
<svg class="a" style="left:938px;top:98px" width="106" height="22" viewBox="0 0 106 22"><path d="M1 22V6.300L5.300 2H105V22Z" fill="#FC9A4E"/><path d="M0.5 5.500L5.500 0.500H105.5V22" fill="none" stroke="#7088A8" stroke-width="1"/></svg>
<div class="t" style="left:943.3px;top:103px;letter-spacing:0.213px;color:#000">Flat Discounts</div>
<svg class="a" style="left:1044px;top:98px" width="51" height="22" viewBox="0 0 51 22"><path d="M1 22V6.300L5.300 2H50V22Z" fill="#FC9A4E"/><path d="M0.5 5.500L5.500 0.500H50.5V22" fill="none" stroke="#7088A8" stroke-width="1"/></svg>
<div class="t" style="left:1049.3px;top:103px;letter-spacing:0.113px;color:#000">UDF</div>
<div class="a" style="left:10px;top:120px;width:1168px;height:212px;background:#C9DDF6;border:1px solid #6F93D6;border-right-color:#7A8CA6;border-bottom-color:#7A8CA6"></div>
<div class="a" style="left:12px;top:121px;width:1164px;height:1px;background:#fff"></div>
<div class="a" style="left:1178px;top:121px;width:1px;height:212px;background:#BEBEBE"></div>
<div class="a" style="left:11px;top:332px;width:1168px;height:1px;background:#BEBEBE"></div>
<div class="a" style="left:12px;top:124px;width:1163px;height:205px;background:#fff"></div>
<div class="a" style="left:12px;top:124px;width:1162px;height:204px;background:#fff;border:1px solid #A8A8A8"></div>
<div class="a" style="left:14px;top:120px;width:87px;height:2px;background:#C9DDF6"></div>
<div class="t" style="left:17px;top:133px;letter-spacing:0.387px;color:#222">Number</div>
<div class="fld" style="left:99px;top:130px;width:120px;height:24px"><span style="letter-spacing:0.206px">ORD-1277</span></div>
<div class="t" style="left:17px;top:161px;letter-spacing:0.271px;color:#222">Description</div>
<div class="fldw" style="left:99px;top:158px;width:120px;height:24px"></div>
<div class="t" style="left:17px;top:189px;letter-spacing:0.136px;color:#222">Date Created</div>
<div class="fld" style="left:99px;top:186px;width:120px;height:24px"><span style="letter-spacing:0.195px">12/11/2018</span></div>
<div class="t" style="left:17px;top:217px;letter-spacing:0.081px;color:#222">Site</div>
<div class="fld" style="left:99px;top:214px;width:120px;height:24px"><span style="letter-spacing:-0.112px">SANFRANCISCO</span></div>
<div class="t" style="left:17px;top:245px;letter-spacing:0.027px;color:#222">Project Mgr.</div>
<div class="fldb" style="left:99px;top:242px;width:120px;height:24px"></div>
<div class="t" style="left:17px;top:273px;letter-spacing:0.302px;color:#222">Sales Person</div>
<div class="fldb" style="left:99px;top:270px;width:120px;height:24px"></div>
<div class="t" style="left:17px;top:301px;letter-spacing:0.201px;color:#222">Labor Planner</div>
<div class="fldw" style="left:99px;top:298px;width:120px;height:24px"></div>
<div class="a" style="left:300px;top:133px;width:281px;height:97px;border:1px solid #B8B8B8"></div>
<div class="a" style="left:440px;top:127px;width:27px;height:12px;background:#fff"></div>
<div class="t" style="left:451px;top:128px;letter-spacing:-0.329px;font-weight:bold;color:#111">on</div>
<div class="t" style="left:446.5px;top:146px;color:#222">e</div>
<div class="fld" style="left:458px;top:143px;width:121px;height:24px;"><span style="letter-spacing:0.066px">12/11/2018 11:55 AM</span></div>
<div class="fld" style="left:458px;top:172px;width:121px;height:24px;"><span style="letter-spacing:0.066px">12/13/2018 11:55 AM</span></div>
<div class="fld" style="left:458px;top:201px;width:85px;height:24px;">2d</div>
<div class="t" style="left:588px;top:148px;letter-spacing:-0.003px;color:#222">Conv. Date</div>
<div class="fld" style="left:655px;top:143px;width:89px;height:24px"></div>
<div class="cb" style="left:589px;top:177px"></div>
<svg class="a" style="left:589px;top:177px" width="13" height="13" viewBox="0 0 13 13"><path d="M3 5H4.700V7.400L9.700 3L10.300 3.800L4.700 9.700H3Z" fill="#111"/></svg>
<div class="t" style="left:606px;top:177px;letter-spacing:0.288px;color:#222">Show Suggestions</div>
<div class="cb" style="left:589px;top:201px"></div>
<div class="t" style="left:606px;top:201px;letter-spacing:0.023px;color:#222">Event Pricing</div>
<div class="fld" style="left:300px;top:238px;width:281px;height:24px"></div>
<svg class="a" style="left:561.3px;top:238.75px" width="18" height="17" viewBox="0 0 18 17"><path d="M10 9.800L15.300 15" stroke="#6A6AA8" stroke-width="3.400" stroke-linecap="round"/><path d="M10.300 9.300L15.700 14.500" stroke="#F5A030" stroke-width="2" stroke-linecap="round"/><circle cx="6.500" cy="6.300" r="5" fill="url(#gLens)" stroke="#8C94C8" stroke-width="1.100"/><path d="M7.500 2.800Q9.800 3.500 10 6" stroke="#fff" stroke-width="1.100" fill="none" opacity=".9"/></svg>
<div class="fld" style="left:300px;top:267px;width:281px;height:24px;padding-left:146.7px"><span style="letter-spacing:-0.035px">K C WEBBER</span></div>
<svg class="a" style="left:561.3px;top:267.75px" width="18" height="17" viewBox="0 0 18 17"><path d="M10 9.800L15.300 15" stroke="#6A6AA8" stroke-width="3.400" stroke-linecap="round"/><path d="M10.300 9.300L15.700 14.500" stroke="#F5A030" stroke-width="2" stroke-linecap="round"/><circle cx="6.500" cy="6.300" r="5" fill="url(#gLens)" stroke="#8C94C8" stroke-width="1.100"/><path d="M7.500 2.800Q9.800 3.500 10 6" stroke="#fff" stroke-width="1.100" fill="none" opacity=".9"/></svg>
<div class="fld" style="left:451px;top:296px;width:129px;height:24px;padding-left:1px"><span style="letter-spacing:0.327px">4232212</span></div>
<div class="t" style="left:587px;top:243px;letter-spacing:0.094px;color:#222">Bill To</div>
<div class="t" style="left:587px;top:272px;letter-spacing:0.109px;color:#222">Bill Contact</div>
<div class="t" style="left:587px;top:301px;letter-spacing:0.327px;color:#222">Language</div>
<div class="fld" style="left:654px;top:238px;width:160px;height:24px"><span style="letter-spacing:0.108px">JBL</span></div>
<svg class="a" style="left:794.3px;top:238.75px" width="18" height="17" viewBox="0 0 18 17"><path d="M10 9.800L15.300 15" stroke="#6A6AA8" stroke-width="3.400" stroke-linecap="round"/><path d="M10.300 9.300L15.700 14.500" stroke="#F5A030" stroke-width="2" stroke-linecap="round"/><circle cx="6.500" cy="6.300" r="5" fill="url(#gLens)" stroke="#8C94C8" stroke-width="1.100"/><path d="M7.500 2.800Q9.800 3.500 10 6" stroke="#fff" stroke-width="1.100" fill="none" opacity=".9"/></svg>
<div class="fld" style="left:654px;top:267px;width:160px;height:24px"><span style="letter-spacing:-0.078px">MARK C WEBBER</span></div>
<svg class="a" style="left:794.3px;top:267.75px" width="18" height="17" viewBox="0 0 18 17"><path d="M10 9.800L15.300 15" stroke="#6A6AA8" stroke-width="3.400" stroke-linecap="round"/><path d="M10.300 9.300L15.700 14.500" stroke="#F5A030" stroke-width="2" stroke-linecap="round"/><circle cx="6.500" cy="6.300" r="5" fill="url(#gLens)" stroke="#8C94C8" stroke-width="1.100"/><path d="M7.500 2.800Q9.800 3.500 10 6" stroke="#fff" stroke-width="1.100" fill="none" opacity=".9"/></svg>
<div class="fld" style="left:654px;top:296px;width:90px;height:24px"></div>
<svg class="a" style="left:724.3px;top:296.75px" width="18" height="17" viewBox="0 0 18 17"><path d="M10 9.800L15.300 15" stroke="#6A6AA8" stroke-width="3.400" stroke-linecap="round"/><path d="M10.300 9.300L15.700 14.500" stroke="#F5A030" stroke-width="2" stroke-linecap="round"/><circle cx="6.500" cy="6.300" r="5" fill="url(#gLens)" stroke="#8C94C8" stroke-width="1.100"/><path d="M7.500 2.800Q9.800 3.500 10 6" stroke="#fff" stroke-width="1.100" fill="none" opacity=".9"/></svg>
<svg class="a" style="left:754px;top:128px" width="91" height="23" viewBox="0 0 91 23"><path d="M0.5 23V6.5L6.5 0.5H90.5V23" fill="#fff" stroke="#6F93D6" stroke-width="1"/><path d="M2 22V7.300L7.300 2H90V22Z" fill="#C6502E"/></svg>
<div class="t" style="left:759.3px;top:133px;letter-spacing:0.124px;color:#fff;font-weight:bold">Comments</div>
<svg class="a" style="left:845px;top:128px" width="119" height="22" viewBox="0 0 119 22"><path d="M1 22V6.300L5.300 2H118V22Z" fill="#FC9A4E"/><path d="M0.5 5.500L5.500 0.500H118.5V22" fill="none" stroke="#7088A8" stroke-width="1"/></svg>
<div class="t" style="left:848.6px;top:133px;letter-spacing:0.408px;color:#000">LaborComments</div>
<div class="a" style="left:752px;top:150px;width:290px;height:83px;background:#C9DDF6;border:1px solid #6F93D6;border-right-color:#7A8CA6;border-bottom-color:#7A8CA6"></div>
<div class="a" style="left:754px;top:151px;width:286px;height:1px;background:#fff"></div>
<div class="a" style="left:754px;top:154px;width:285px;height:76px;background:#fff"></div>
<div class="a" style="left:754px;top:154px;width:284px;height:75px;background:#fff;border:1px solid #A8A8A8"></div>
<div class="a" style="left:756px;top:150px;width:88px;height:2px;background:#C9DDF6"></div>
<div class="a" style="left:761px;top:156px;width:269px;height:69px;background:#EEEEEE;border:1px solid #6F859F;box-shadow:inset 0 0 0 1px #747C86"></div>
<svg class="a" style="left:1010.2px;top:158px" width="18" height="17" viewBox="0 0 18 17"><path d="M10 9.800L15.300 15" stroke="#6A6AA8" stroke-width="3.400" stroke-linecap="round"/><path d="M10.300 9.300L15.700 14.500" stroke="#F5A030" stroke-width="2" stroke-linecap="round"/><circle cx="6.500" cy="6.300" r="5" fill="url(#gLens)" stroke="#8C94C8" stroke-width="1.100"/><path d="M7.500 2.800Q9.800 3.500 10 6" stroke="#fff" stroke-width="1.100" fill="none" opacity=".9"/></svg>
<div class="t" style="left:826px;top:250px;letter-spacing:0.165px;color:#222">Document Folder:</div>
<div class="a" style="left:1014px;top:242px;width:49px;height:23px;background:#fff;border:1px solid #9C9C9C"></div>
<div class="a" style="left:1024px;top:244px;width:30px;height:20px;background:#fff;border:1px solid #6E6464;border-radius:2px;font-size:11px;line-height:18px;text-align:center;color:#000;letter-spacing:-.75px;text-indent:-.5px;-webkit-text-stroke:.3px #000">Reset</div>
<div class="a" style="left:826px;top:266px;width:216px;height:49px;background:#EEEEEE;border:1px solid #6F859F;box-shadow:inset 0 0 0 1px #747C86"></div>
<svg class="a" style="left:10px;top:336px" width="67" height="23" viewBox="0 0 67 23"><path d="M0.5 23V6.5L6.5 0.5H66.5V23" fill="#fff" stroke="#6F93D6" stroke-width="1"/><path d="M2 22V7.300L7.300 2H66V22Z" fill="#C6502E"/></svg>
<div class="t" style="left:15.3px;top:341px;letter-spacing:0.095px;color:#fff;font-weight:bold">Item(s)</div>
<svg class="a" style="left:77px;top:336px" width="58" height="22" viewBox="0 0 58 22"><path d="M1 22V6.300L5.300 2H57V22Z" fill="#FC9A4E"/><path d="M0.5 5.500L5.500 0.500H57.5V22" fill="none" stroke="#7088A8" stroke-width="1"/></svg>
<div class="t" style="left:82.3px;top:341px;letter-spacing:0.262px;color:#000">Labor</div>
<div class="a" style="left:8px;top:358px;width:1172px;height:335px;background:#C9DDF6;border:1px solid #6F93D6;border-right-color:#7A8CA6;border-bottom-color:#7A8CA6"></div>
<div class="a" style="left:10px;top:359px;width:1168px;height:1px;background:#fff"></div>
<div class="a" style="left:10px;top:362px;width:1167px;height:328px;background:#fff"></div>
<div class="a" style="left:10px;top:362px;width:1166px;height:327px;background:#fff;border:1px solid #A8A8A8"></div>
<div class="a" style="left:12px;top:358px;width:64px;height:2px;background:#C9DDF6"></div>
<div class="a" style="left:12px;top:364px;width:1162px;height:323px;border:1px solid #6F859F;background:#fff"></div>
<div class="a" style="left:13px;top:365px;width:1160px;height:19px;background:#FF6A3C"></div>
<div class="th" style="left:13px;width:14px;letter-spacing:0.334px">C</div>
<div class="th" style="left:28px;width:19px;letter-spacing:0.327px">L</div>
<div class="th" style="left:48px;width:14px;letter-spacing:-0.329px">T</div>
<div class="th" style="left:63px;width:14px;letter-spacing:-0.004px">S</div>
<div class="th" style="left:78px;width:74px;letter-spacing:0.164px">Status</div>
<div class="th" style="left:153px;width:47px;text-align:left;padding-left:5px;letter-spacing:-1.004px">A</div>
<div class="th" style="left:201px;width:157px;letter-spacing:0px"></div>
<div class="th" style="left:359px;width:168px;letter-spacing:0.271px">Description</div>
<div class="th" style="left:528px;width:54px;letter-spacing:0.206px">Duration</div>
<div class="th" style="left:583px;width:29px;letter-spacing:-0.556px">Qty</div>
<div class="th" style="left:613px;width:59px;letter-spacing:0.099px">Unit Price</div>
<div class="th" style="left:673px;width:54px;letter-spacing:0.289px">Discount</div>
<div class="th" style="left:728px;width:119px;letter-spacing:-0.002px">Start Date</div>
<div class="th" style="left:848px;width:119px;letter-spacing:0.121px">End Date</div>
<div class="th" style="left:968px;width:74px;letter-spacing:0.132px">Total Cost</div>
<div class="th" style="left:1043px;width:59px;letter-spacing:0.208px">Net Disc</div>
<div class="th" style="left:1103px;width:59px;letter-spacing:0.08px">Net Each</div>
<div class="th" style="left:1163px;width:10px;letter-spacing:0px"></div>
<div class="a" style="left:13px;top:384px;width:1160px;height:19px;background:#FC9A4E"></div>
<div class="a" style="left:13px;top:403px;width:1160px;height:1px;background:#BF6F33"></div>
<div class="cb s" style="left:14px;top:388px"></div>
<svg class="a" style="left:14px;top:388px" width="13" height="13" viewBox="0 0 13 13"><path d="M3 5H4.700V7.400L9.700 3L10.300 3.800L4.700 9.700H3Z" fill="#111"/></svg>
<div class="cb s" style="left:31px;top:388px"></div>
<div class="cb s" style="left:49px;top:388px"></div>
<svg class="a" style="left:49px;top:388px" width="13" height="13" viewBox="0 0 13 13"><path d="M3 5H4.700V7.400L9.700 3L10.300 3.800L4.700 9.700H3Z" fill="#111"/></svg>
<div class="cb s" style="left:64px;top:388px"></div>
<div class="td" style="left:79px;top:388px;letter-spacing:-0.114px;">Out</div>
<div class="td" style="left:154px;top:388px;">R</div>
<div class="td" style="left:530px;top:388px;letter-spacing:0.195px;">1.99d</div>
<div class="td" style="right:576.673px;top:388px;letter-spacing:0.327px">1</div>
<div class="td" style="right:516.783px;top:388px;letter-spacing:0.217px">100.00</div>
<div class="td" style="right:461.838px;top:388px;letter-spacing:0.162px">0.00</div>
<div class="td" style="left:731px;top:388px;letter-spacing:0.066px;">12/11/2018 11:55 AM</div>
<div class="td" style="left:850px;top:388px;letter-spacing:0.066px;">12/13/2018 11:55 AM</div>
<div class="td" style="right:146.838px;top:388px;letter-spacing:0.162px">0.00</div>
<div class="td" style="right:86.838px;top:388px;letter-spacing:0.162px">0.00</div>
<div class="td" style="right:27.783px;top:388px;letter-spacing:0.217px">199.17</div>
<div class="a" style="left:13px;top:422px;width:1160px;height:1px;background:#BF6F33"></div>
<div class="cb" style="left:14px;top:407px"></div>
<div class="cb" style="left:31px;top:407px"></div>
<div class="cb" style="left:49px;top:407px"></div>
<svg class="a" style="left:49px;top:407px" width="13" height="13" viewBox="0 0 13 13"><path d="M3 5H4.700V7.400L9.700 3L10.300 3.800L4.700 9.700H3Z" fill="#111"/></svg>
<div class="cb" style="left:64px;top:407px"></div>
<div class="td" style="left:79px;top:407px;letter-spacing:0.275px;">Repair</div>
<div class="td" style="left:154px;top:407px;">R</div>
<div class="td" style="left:530px;top:407px;letter-spacing:0.195px;">0.01d</div>
<div class="td" style="right:576.673px;top:407px;letter-spacing:0.327px">1</div>
<div class="td" style="right:516.783px;top:407px;letter-spacing:0.217px">100.00</div>
<div class="td" style="right:461.838px;top:407px;letter-spacing:0.162px">0.00</div>
<div class="td" style="left:731px;top:407px;letter-spacing:0.066px;">12/11/2018 11:55 AM</div>
<div class="td" style="left:850px;top:407px;letter-spacing:0.119px;">12/11/2018 12:23 PM</div>
<div class="td" style="right:146.838px;top:407px;letter-spacing:0.162px">0.00</div>
<div class="td" style="right:86.838px;top:407px;letter-spacing:0.162px">0.00</div>
<div class="td" style="right:27.838px;top:407px;letter-spacing:0.162px">1.32</div>
<div class="a" style="left:13px;top:441px;width:1160px;height:1px;background:#BF6F33"></div>
<div class="cb" style="left:14px;top:426px"></div>
<div class="cb" style="left:31px;top:426px"></div>
<div class="cb" style="left:49px;top:426px"></div>
<svg class="a" style="left:49px;top:426px" width="13" height="13" viewBox="0 0 13 13"><path d="M3 5H4.700V7.400L9.700 3L10.300 3.800L4.700 9.700H3Z" fill="#111"/></svg>
<div class="cb" style="left:64px;top:426px"></div>
<div class="td" style="left:79px;top:426px;letter-spacing:-0.114px;">Out</div>
<div class="td" style="left:154px;top:426px;">R</div>
<div class="td" style="left:530px;top:426px;letter-spacing:0.195px;">1.99d</div>
<div class="td" style="right:576.673px;top:426px;letter-spacing:0.327px">1</div>
<div class="td" style="right:516.783px;top:426px;letter-spacing:0.217px">100.00</div>
<div class="td" style="right:461.838px;top:426px;letter-spacing:0.162px">0.00</div>
<div class="td" style="left:731px;top:426px;letter-spacing:0.066px;">12/11/2018 11:55 AM</div>
<div class="td" style="left:850px;top:426px;letter-spacing:0.066px;">12/13/2018 11:55 AM</div>
<div class="td" style="right:146.838px;top:426px;letter-spacing:0.162px">0.00</div>
<div class="td" style="right:86.838px;top:426px;letter-spacing:0.162px">0.00</div>
<div class="td" style="right:27.783px;top:426px;letter-spacing:0.217px">199.17</div>
<div class="a" style="left:13px;top:460px;width:1160px;height:1px;background:#BF6F33"></div>
<div class="cb" style="left:14px;top:445px"></div>
<div class="cb" style="left:31px;top:445px"></div>
<div class="cb" style="left:49px;top:445px"></div>
<svg class="a" style="left:49px;top:445px" width="13" height="13" viewBox="0 0 13 13"><path d="M3 5H4.700V7.400L9.700 3L10.300 3.800L4.700 9.700H3Z" fill="#111"/></svg>
<div class="cb" style="left:64px;top:445px"></div>
<div class="td" style="left:79px;top:445px;letter-spacing:0.33px;">Lost</div>
<div class="td" style="left:154px;top:445px;">R</div>
<div class="td" style="left:530px;top:445px;letter-spacing:0.195px;">0.01d</div>
<div class="td" style="right:576.673px;top:445px;letter-spacing:0.327px">1</div>
<div class="td" style="right:516.783px;top:445px;letter-spacing:0.217px">100.00</div>
<div class="td" style="right:461.838px;top:445px;letter-spacing:0.162px">0.00</div>
<div class="td" style="left:731px;top:445px;letter-spacing:0.066px;">12/11/2018 11:55 AM</div>
<div class="td" style="left:850px;top:445px;letter-spacing:0.119px;">12/11/2018 12:08 PM</div>
<div class="td" style="right:146.838px;top:445px;letter-spacing:0.162px">0.00</div>
<div class="td" style="right:86.838px;top:445px;letter-spacing:0.162px">0.00</div>
<div class="td" style="right:27.838px;top:445px;letter-spacing:0.162px">1.32</div>
<div class="a" style="left:13px;top:479px;width:1160px;height:1px;background:#BF6F33"></div>
<div class="cb" style="left:14px;top:464px"></div>
<div class="cb" style="left:31px;top:464px"></div>
<div class="cb" style="left:49px;top:464px"></div>
<svg class="a" style="left:49px;top:464px" width="13" height="13" viewBox="0 0 13 13"><path d="M3 5H4.700V7.400L9.700 3L10.300 3.800L4.700 9.700H3Z" fill="#111"/></svg>
<div class="cb" style="left:64px;top:464px"></div>
<div class="td" style="left:79px;top:464px;letter-spacing:-0.114px;">Out</div>
<div class="td" style="left:154px;top:464px;">R</div>
<div class="td" style="left:447px;top:464px;letter-spacing:0.164px;">d-4/4D</div>
<div class="td" style="left:530px;top:464px;letter-spacing:0.195px;">1.99d</div>
<div class="td" style="right:576.673px;top:464px;letter-spacing:0.327px">1</div>
<div class="td" style="right:516.783px;top:464px;letter-spacing:0.217px">100.00</div>
<div class="td" style="right:461.838px;top:464px;letter-spacing:0.162px">0.00</div>
<div class="td" style="left:731px;top:464px;letter-spacing:0.066px;">12/11/2018 11:55 AM</div>
<div class="td" style="left:850px;top:464px;letter-spacing:0.066px;">12/13/2018 11:55 AM</div>
<div class="td" style="right:146.838px;top:464px;letter-spacing:0.162px">0.00</div>
<div class="td" style="right:86.838px;top:464px;letter-spacing:0.162px">0.00</div>
<div class="td" style="right:27.783px;top:464px;letter-spacing:0.217px">199.17</div>
<div class="a" style="left:13px;top:498px;width:1160px;height:1px;background:#BF6F33"></div>
<div class="cb" style="left:14px;top:483px"></div>
<div class="cb" style="left:31px;top:483px"></div>
<div class="cb" style="left:49px;top:483px"></div>
<svg class="a" style="left:49px;top:483px" width="13" height="13" viewBox="0 0 13 13"><path d="M3 5H4.700V7.400L9.700 3L10.300 3.800L4.700 9.700H3Z" fill="#111"/></svg>
<div class="cb" style="left:64px;top:483px"></div>
<div class="td" style="left:79px;top:483px;letter-spacing:0.33px;">Lost</div>
<div class="td" style="left:154px;top:483px;">R</div>
<div class="td" style="left:447px;top:483px;letter-spacing:0.164px;">d-4/4D</div>
<div class="td" style="left:530px;top:483px;letter-spacing:0.195px;">0.01d</div>
<div class="td" style="right:576.673px;top:483px;letter-spacing:0.327px">1</div>
<div class="td" style="right:516.783px;top:483px;letter-spacing:0.217px">100.00</div>
<div class="td" style="right:461.838px;top:483px;letter-spacing:0.162px">0.00</div>
<div class="td" style="left:731px;top:483px;letter-spacing:0.066px;">12/11/2018 11:55 AM</div>
<div class="td" style="left:850px;top:483px;letter-spacing:0.119px;">12/11/2018 12:10 PM</div>
<div class="td" style="right:146.838px;top:483px;letter-spacing:0.162px">0.00</div>
<div class="td" style="right:86.838px;top:483px;letter-spacing:0.162px">0.00</div>
<div class="td" style="right:27.838px;top:483px;letter-spacing:0.162px">1.32</div>
<div class="a" style="left:13px;top:517px;width:1160px;height:1px;background:#BF6F33"></div>
<div class="cb" style="left:14px;top:502px"></div>
<div class="cb" style="left:31px;top:502px"></div>
<div class="cb" style="left:49px;top:502px"></div>
<svg class="a" style="left:49px;top:502px" width="13" height="13" viewBox="0 0 13 13"><path d="M3 5H4.700V7.400L9.700 3L10.300 3.800L4.700 9.700H3Z" fill="#111"/></svg>
<div class="cb" style="left:64px;top:502px"></div>
<div class="td" style="left:79px;top:502px;letter-spacing:-0.114px;">Out</div>
<div class="td" style="left:154px;top:502px;">R</div>
<div class="td" style="left:530px;top:502px;letter-spacing:0.195px;">1.99d</div>
<div class="td" style="right:576.673px;top:502px;letter-spacing:0.327px">1</div>
<div class="td" style="right:516.783px;top:502px;letter-spacing:0.217px">100.00</div>
<div class="td" style="right:461.838px;top:502px;letter-spacing:0.162px">0.00</div>
<div class="td" style="left:731px;top:502px;letter-spacing:0.066px;">12/11/2018 11:55 AM</div>
<div class="td" style="left:850px;top:502px;letter-spacing:0.066px;">12/13/2018 11:55 AM</div>
<div class="td" style="right:146.838px;top:502px;letter-spacing:0.162px">0.00</div>
<div class="td" style="right:86.838px;top:502px;letter-spacing:0.162px">0.00</div>
<div class="td" style="right:27.783px;top:502px;letter-spacing:0.217px">199.17</div>
<div class="a" style="left:13px;top:536px;width:1160px;height:1px;background:#BF6F33"></div>
<div class="cb" style="left:14px;top:521px"></div>
<div class="cb" style="left:31px;top:521px"></div>
<div class="cb" style="left:49px;top:521px"></div>
<svg class="a" style="left:49px;top:521px" width="13" height="13" viewBox="0 0 13 13"><path d="M3 5H4.700V7.400L9.700 3L10.300 3.800L4.700 9.700H3Z" fill="#111"/></svg>
<div class="cb" style="left:64px;top:521px"></div>
<div class="td" style="left:79px;top:521px;letter-spacing:0.275px;">Repair</div>
<div class="td" style="left:154px;top:521px;">R</div>
<div class="td" style="left:530px;top:521px;letter-spacing:0.195px;">0.01d</div>
<div class="td" style="right:576.673px;top:521px;letter-spacing:0.327px">1</div>
<div class="td" style="right:516.783px;top:521px;letter-spacing:0.217px">100.00</div>
<div class="td" style="right:461.838px;top:521px;letter-spacing:0.162px">0.00</div>
<div class="td" style="left:731px;top:521px;letter-spacing:0.066px;">12/11/2018 11:55 AM</div>
<div class="td" style="left:850px;top:521px;letter-spacing:0.119px;">12/11/2018 12:24 PM</div>
<div class="td" style="right:146.838px;top:521px;letter-spacing:0.162px">0.00</div>
<div class="td" style="right:86.838px;top:521px;letter-spacing:0.162px">0.00</div>
<div class="td" style="right:27.838px;top:521px;letter-spacing:0.162px">1.32</div>
<div class="a" style="left:13px;top:555px;width:1160px;height:1px;background:#BF6F33"></div>
<div class="cb" style="left:14px;top:540px"></div>
<div class="cb" style="left:31px;top:540px"></div>
<div class="cb" style="left:49px;top:540px"></div>
<svg class="a" style="left:49px;top:540px" width="13" height="13" viewBox="0 0 13 13"><path d="M3 5H4.700V7.400L9.700 3L10.300 3.800L4.700 9.700H3Z" fill="#111"/></svg>
<div class="cb" style="left:64px;top:540px"></div>
<div class="td" style="left:79px;top:540px;letter-spacing:-0.114px;">Out</div>
<div class="td" style="left:154px;top:540px;">R</div>
<div class="td" style="left:448.3px;top:540px;letter-spacing:0.108px;">ERS</div>
<div class="td" style="left:530px;top:540px;letter-spacing:0.195px;">1.99d</div>
<div class="td" style="right:576.673px;top:540px;letter-spacing:0.327px">2</div>
<div class="td" style="right:516.783px;top:540px;letter-spacing:0.217px">100.00</div>
<div class="td" style="right:461.838px;top:540px;letter-spacing:0.162px">0.00</div>
<div class="td" style="left:731px;top:540px;letter-spacing:0.066px;">12/11/2018 11:55 AM</div>
<div class="td" style="left:850px;top:540px;letter-spacing:0.066px;">12/13/2018 11:55 AM</div>
<div class="td" style="right:146.838px;top:540px;letter-spacing:0.162px">0.00</div>
<div class="td" style="right:86.838px;top:540px;letter-spacing:0.162px">0.00</div>
<div class="td" style="right:27.783px;top:540px;letter-spacing:0.217px">199.17</div>
<div class="a" style="left:13px;top:574px;width:1160px;height:1px;background:#BF6F33"></div>
<div class="cb" style="left:14px;top:559px"></div>
<div class="cb" style="left:31px;top:559px"></div>
<div class="cb" style="left:49px;top:559px"></div>
<svg class="a" style="left:49px;top:559px" width="13" height="13" viewBox="0 0 13 13"><path d="M3 5H4.700V7.400L9.700 3L10.300 3.800L4.700 9.700H3Z" fill="#111"/></svg>
<div class="cb" style="left:64px;top:559px"></div>
<div class="td" style="left:79px;top:559px;letter-spacing:-0.114px;">Out</div>
<div class="td" style="left:154px;top:559px;">R</div>
<div class="td" style="left:449px;top:559px;letter-spacing:0.08px;">- LX 100</div>
<div class="td" style="left:530px;top:559px;letter-spacing:0.195px;">1.99d</div>
<div class="td" style="right:576.673px;top:559px;letter-spacing:0.327px">2</div>
<div class="td" style="right:516.783px;top:559px;letter-spacing:0.217px">100.00</div>
<div class="td" style="right:461.838px;top:559px;letter-spacing:0.162px">0.00</div>
<div class="td" style="left:731px;top:559px;letter-spacing:0.066px;">12/11/2018 11:55 AM</div>
<div class="td" style="left:850px;top:559px;letter-spacing:0.066px;">12/13/2018 11:55 AM</div>
<div class="td" style="right:146.838px;top:559px;letter-spacing:0.162px">0.00</div>
<div class="td" style="right:86.838px;top:559px;letter-spacing:0.162px">0.00</div>
<div class="td" style="right:27.783px;top:559px;letter-spacing:0.217px">199.17</div>
<div class="a" style="left:13px;top:593px;width:1160px;height:1px;background:#BF6F33"></div>
<div class="cb" style="left:14px;top:578px"></div>
<div class="cb" style="left:31px;top:578px"></div>
<div class="cb" style="left:49px;top:578px"></div>
<svg class="a" style="left:49px;top:578px" width="13" height="13" viewBox="0 0 13 13"><path d="M3 5H4.700V7.400L9.700 3L10.300 3.800L4.700 9.700H3Z" fill="#111"/></svg>
<div class="cb" style="left:64px;top:578px"></div>
<div class="td" style="left:79px;top:578px;letter-spacing:-0.114px;">Out</div>
<div class="td" style="left:154px;top:578px;">R</div>
<div class="td" style="left:530px;top:578px;letter-spacing:0.195px;">1.99d</div>
<div class="td" style="right:576.673px;top:578px;letter-spacing:0.327px">2</div>
<div class="td" style="right:516.783px;top:578px;letter-spacing:0.217px">100.00</div>
<div class="td" style="right:461.838px;top:578px;letter-spacing:0.162px">0.00</div>
<div class="td" style="left:731px;top:578px;letter-spacing:0.066px;">12/11/2018 11:55 AM</div>
<div class="td" style="left:850px;top:578px;letter-spacing:0.066px;">12/13/2018 11:55 AM</div>
<div class="td" style="right:146.838px;top:578px;letter-spacing:0.162px">0.00</div>
<div class="td" style="right:86.838px;top:578px;letter-spacing:0.162px">0.00</div>
<div class="td" style="right:27.783px;top:578px;letter-spacing:0.217px">199.17</div>
<div class="a" style="left:13px;top:612px;width:1160px;height:1px;background:#BF6F33"></div>
<div class="cb" style="left:14px;top:597px"></div>
<div class="cb" style="left:31px;top:597px"></div>
<div class="cb" style="left:49px;top:597px"></div>
<svg class="a" style="left:49px;top:597px" width="13" height="13" viewBox="0 0 13 13"><path d="M3 5H4.700V7.400L9.700 3L10.300 3.800L4.700 9.700H3Z" fill="#111"/></svg>
<div class="cb" style="left:64px;top:597px"></div>
<div class="td" style="left:79px;top:597px;letter-spacing:-0.114px;">Out</div>
<div class="td" style="left:154px;top:597px;">R</div>
<div class="td" style="left:448.3px;top:597px;letter-spacing:0.108px;">ERS</div>
<div class="td" style="left:530px;top:597px;letter-spacing:0.195px;">1.99d</div>
<div class="td" style="right:576.673px;top:597px;letter-spacing:0.327px">2</div>
<div class="td" style="right:516.783px;top:597px;letter-spacing:0.217px">100.00</div>
<div class="td" style="right:461.838px;top:597px;letter-spacing:0.162px">0.00</div>
<div class="td" style="left:731px;top:597px;letter-spacing:0.066px;">12/11/2018 11:55 AM</div>
<div class="td" style="left:850px;top:597px;letter-spacing:0.066px;">12/13/2018 11:55 AM</div>
<div class="td" style="right:146.838px;top:597px;letter-spacing:0.162px">0.00</div>
<div class="td" style="right:86.838px;top:597px;letter-spacing:0.162px">0.00</div>
<div class="td" style="right:27.783px;top:597px;letter-spacing:0.217px">199.17</div>
<div class="a" style="left:13px;top:631px;width:1160px;height:1px;background:#BF6F33"></div>
<div class="cb" style="left:14px;top:616px"></div>
<div class="cb" style="left:31px;top:616px"></div>
<div class="cb" style="left:49px;top:616px"></div>
<svg class="a" style="left:49px;top:616px" width="13" height="13" viewBox="0 0 13 13"><path d="M3 5H4.700V7.400L9.700 3L10.300 3.800L4.700 9.700H3Z" fill="#111"/></svg>
<div class="cb" style="left:64px;top:616px"></div>
<div class="td" style="left:79px;top:616px;letter-spacing:-0.114px;">Out</div>
<div class="td" style="left:154px;top:616px;">R</div>
<div class="td" style="left:530px;top:616px;letter-spacing:0.195px;">1.99d</div>
<div class="td" style="right:576.673px;top:616px;letter-spacing:0.327px">2</div>
<div class="td" style="right:516.783px;top:616px;letter-spacing:0.217px">100.00</div>
<div class="td" style="right:461.838px;top:616px;letter-spacing:0.162px">0.00</div>
<div class="td" style="left:731px;top:616px;letter-spacing:0.066px;">12/11/2018 11:55 AM</div>
<div class="td" style="left:850px;top:616px;letter-spacing:0.066px;">12/13/2018 11:55 AM</div>
<div class="td" style="right:146.838px;top:616px;letter-spacing:0.162px">0.00</div>
<div class="td" style="right:86.838px;top:616px;letter-spacing:0.162px">0.00</div>
<div class="td" style="right:27.783px;top:616px;letter-spacing:0.217px">199.17</div>
<div class="a" style="left:13px;top:650px;width:1160px;height:1px;background:#BF6F33"></div>
<div class="cb" style="left:14px;top:635px"></div>
<div class="cb" style="left:31px;top:635px"></div>
<div class="cb" style="left:49px;top:635px"></div>
<svg class="a" style="left:49px;top:635px" width="13" height="13" viewBox="0 0 13 13"><path d="M3 5H4.700V7.400L9.700 3L10.300 3.800L4.700 9.700H3Z" fill="#111"/></svg>
<div class="cb" style="left:64px;top:635px"></div>
<div class="td" style="left:79px;top:635px;letter-spacing:-0.114px;">Out</div>
<div class="td" style="left:154px;top:635px;">R</div>
<div class="td" style="left:530px;top:635px;letter-spacing:0.195px;">1.99d</div>
<div class="td" style="right:576.673px;top:635px;letter-spacing:0.327px">2</div>
<div class="td" style="right:516.783px;top:635px;letter-spacing:0.217px">100.00</div>
<div class="td" style="right:461.838px;top:635px;letter-spacing:0.162px">0.00</div>
<div class="td" style="left:731px;top:635px;letter-spacing:0.066px;">12/11/2018 11:55 AM</div>
<div class="td" style="left:850px;top:635px;letter-spacing:0.066px;">12/13/2018 11:55 AM</div>
<div class="td" style="right:146.838px;top:635px;letter-spacing:0.162px">0.00</div>
<div class="td" style="right:86.838px;top:635px;letter-spacing:0.162px">0.00</div>
<div class="td" style="right:27.783px;top:635px;letter-spacing:0.217px">199.17</div>
<div class="a" style="left:27px;top:384px;width:1px;height:267px;background:#BF6F33"></div>
<div class="a" style="left:47px;top:384px;width:1px;height:267px;background:#BF6F33"></div>
<div class="a" style="left:62px;top:384px;width:1px;height:267px;background:#BF6F33"></div>
<div class="a" style="left:77px;top:384px;width:1px;height:267px;background:#BF6F33"></div>
<div class="a" style="left:152px;top:384px;width:1px;height:267px;background:#BF6F33"></div>
<div class="a" style="left:200px;top:384px;width:1px;height:267px;background:#BF6F33"></div>
<div class="a" style="left:358px;top:384px;width:1px;height:267px;background:#BF6F33"></div>
<div class="a" style="left:527px;top:384px;width:1px;height:267px;background:#BF6F33"></div>
<div class="a" style="left:582px;top:384px;width:1px;height:267px;background:#BF6F33"></div>
<div class="a" style="left:612px;top:384px;width:1px;height:267px;background:#BF6F33"></div>
<div class="a" style="left:672px;top:384px;width:1px;height:267px;background:#BF6F33"></div>
<div class="a" style="left:727px;top:384px;width:1px;height:267px;background:#BF6F33"></div>
<div class="a" style="left:847px;top:384px;width:1px;height:267px;background:#BF6F33"></div>
<div class="a" style="left:967px;top:384px;width:1px;height:267px;background:#BF6F33"></div>
<div class="a" style="left:1042px;top:384px;width:1px;height:267px;background:#BF6F33"></div>
<div class="a" style="left:1102px;top:384px;width:1px;height:267px;background:#BF6F33"></div>
<div class="a" style="left:1162px;top:384px;width:1px;height:267px;background:#BF6F33"></div>
<div class="a" style="left:13px;top:669px;width:1160px;height:17px;background:#EEEEEE;border-top:1px solid #6F859F;border-bottom:1px solid #C9DDF6;box-shadow:inset 0 1px 0 #C9DDF6"></div>
<div class="a" style="left:13px;top:684px;width:1160px;height:1px;background:#6F859F"></div>
<div class="a" style="left:13px;top:670px;width:15px;height:14px;background:#EEEEEE;border-top:1px solid #fff;border-left:1px solid #fff"></div>
<svg class="a" style="left:18px;top:673px" width="6" height="10" viewBox="0 0 6 10"><path d="M5 1V9L1 5Z" fill="#222"/></svg>
<div class="a" style="left:1156px;top:670px;width:16px;height:14px;background:#EEEEEE;border-left:1px solid #6F859F;border-right:1px solid #6F859F;box-shadow:inset 1px 1px 0 #fff"></div>
<div class="a" style="left:1172px;top:669px;width:1px;height:17px;background:#fff"></div>
<svg class="a" style="left:1162px;top:673px" width="6" height="10" viewBox="0 0 6 10"><path d="M1 1V9L5 5Z" fill="#222"/></svg>
<div class="a" style="left:28px;top:669px;width:412px;height:16px;background:linear-gradient(#F0B48C 0%,#F3C4A2 40%,#ECA476 100%);border:1px solid #FFC000;box-shadow:inset 0 0 0 1px #E8925A"></div>
<div class="t b" style="left:70px;top:699px;font-size:14px;line-height:18px;height:18px;color:#222;letter-spacing:0.086px">Items</div>
<div class="fld b" style="left:120px;top:695px;width:100px;height:24px;font-size:14px;line-height:18px;padding:2px 0 0 1px;color:#222;border-color:#6A6A6A;letter-spacing:0.192px">$ 3191.62</div>
<div class="t b" style="left:446.5px;top:699px;font-size:14px;line-height:18px;height:18px;color:#222;letter-spacing:0.248px">Sub Total</div>
<div class="fld b" style="left:525px;top:695px;width:100px;height:24px;font-size:14px;line-height:18px;padding:2px 0 0 1px;color:#222;border-color:#6A6A6A;letter-spacing:0.192px">$ 3331.62</div>
<div class="t b" style="left:636px;top:699px;font-size:14px;line-height:18px;height:18px;color:#222;letter-spacing:0.293px">Tax</div>
<div class="fld b" style="left:670px;top:695px;width:100px;height:24px;font-size:14px;line-height:18px;padding:2px 0 0 1px;color:#222;border-color:#6A6A6A;letter-spacing:0.189px">$ 666.32</div>
<div class="a" style="left:813px;top:696px;width:89px;height:22px;background:#fff;border:1px solid #D0D0D0"></div>
<div class="t b" style="left:842px;top:699px;font-size:14px;line-height:18px;height:18px;color:#222;letter-spacing:0.312px">Total</div>
<div class="fld b" style="left:906px;top:695px;width:100px;height:24px;font-size:14px;line-height:18px;padding:2px 0 0 1px;color:#222;border-color:#6A6A6A;letter-spacing:0.192px">$ 3997.94</div>
<div class="a" style="left:8px;top:729px;width:1172px;height:24px;background:#fff;border:1px solid #CDD2D6;border-right-color:#fff;border-bottom-color:#BEBEBE"></div>
<div class="a" style="left:9px;top:730px;width:1170px;height:22px;border-top:1px solid #808080;border-left:1px solid #808080;border-right:1px solid #BEBEBE"></div>
<div class="a" style="left:164px;top:0px;width:287px;height:762px;background:#EEEEEE;border:1px solid #6F8FCB;border-bottom:none;box-shadow:inset 1px 1px 0 #fff"></div>
<div class="mi" style="left:171px;top:7px;letter-spacing:0.0px;">Fill All</div>
<div class="mi" style="left:171px;top:28px;letter-spacing:0.039px;">Ship All</div>
<div class="mi" style="left:171px;top:49px;letter-spacing:0.031px;">Return All</div>
<div class="sep" style="top:67px"></div><div class="sep" style="top:68px;background:#fff"></div>
<div class="mi" style="left:171px;top:74px;letter-spacing:0.331px;">Assign</div>
<div class="arr" style="top:76px"></div>
<div class="sep" style="top:92px"></div><div class="sep" style="top:93px;background:#fff"></div>
<div class="mi" style="left:171px;top:99px;letter-spacing:0.274px;">Change Dates</div>
<div class="arr" style="top:101px"></div>
<div class="mi" style="left:171px;top:120px;letter-spacing:0.243px;">Change Charge Durations</div>
<div class="arr" style="top:122px"></div>
<div class="mi" style="left:171px;top:141px;letter-spacing:0.063px;">Change Days In Week / Month For All Lines</div>
<div class="mi" style="left:171px;top:162px;letter-spacing:0.11px;">Dark Days</div>
<div class="sep" style="top:180px"></div><div class="sep" style="top:181px;background:#fff"></div>
<div class="mi" style="left:171px;top:187px;letter-spacing:0.329px;">Done</div>
<div class="mi" style="left:171px;top:208px;letter-spacing:-0.155px;">Pay Advance</div>
<div class="acc" style="left:410px;top:209px;letter-spacing:-0.092px">Ctrl-Y</div>
<div class="sep" style="top:226px"></div><div class="sep" style="top:227px;background:#fff"></div>
<div class="mi" style="left:171px;top:233px;letter-spacing:-0.002px;">Check Availability</div>
<div class="acc" style="left:410px;top:234px;letter-spacing:0.066px">Alt-A</div>
<div class="sep" style="top:251px"></div><div class="sep" style="top:252px;background:#fff"></div>
<div class="mi" style="left:171px;top:258px;letter-spacing:0.131px;">Cancel Contract</div>
<div class="sep" style="top:276px"></div><div class="sep" style="top:277px;background:#fff"></div>
<div class="mi" style="left:171px;top:283px;letter-spacing:-0.004px;">Set</div>
<div class="arr" style="top:285px"></div>
<div class="sep" style="top:301px"></div><div class="sep" style="top:302px;background:#fff"></div>
<div class="mi" style="left:171px;top:308px;letter-spacing:0.071px;">Approvals</div>
<div class="arr" style="top:310px"></div>
<div class="mi" style="left:171px;top:329px;letter-spacing:0.146px;">Discount Approvals</div>
<div class="arr" style="top:331px"></div>
<div class="sep" style="top:347px"></div><div class="sep" style="top:348px;background:#fff"></div>
<div class="mi" style="left:171px;top:354px;letter-spacing:0.229px;">Update Replacement Cost</div>
<div class="sep" style="top:372px"></div><div class="sep" style="top:373px;background:#fff"></div>
<div class="mi" style="left:171px;top:379px;letter-spacing:0.198px;">Generate Accessories</div>
<div class="mi" style="left:171px;top:400px;letter-spacing:0.077px;">Generate Pickup Order</div>
<div class="sep" style="top:418px"></div><div class="sep" style="top:419px;background:#fff"></div>
<div class="mi" style="left:171px;top:425px;letter-spacing:0.059px;">Reserve All</div>
<div class="mi" style="left:171px;top:446px;letter-spacing:-0.002px;">Sort</div>
<div class="arr" style="top:448px"></div>
<div class="sep" style="top:464px"></div><div class="sep" style="top:465px;background:#fff"></div>
<div class="mi" style="left:171px;top:471px;letter-spacing:0.072px;">Ship All Sell Item</div>
<div class="sep" style="top:489px"></div><div class="sep" style="top:490px;background:#fff"></div>
<div class="mi" style="left:171px;top:496px;letter-spacing:0.144px;">Pricing Analysis</div>
<div class="sep" style="top:514px"></div><div class="sep" style="top:515px;background:#fff"></div>
<div class="mi" style="left:171px;top:521px;letter-spacing:0.032px;">Flat Price</div>
<div class="sep" style="top:539px"></div><div class="sep" style="top:540px;background:#fff"></div>
<div class="mi" style="left:171px;top:546px;letter-spacing:0.15px;">Enter Items</div>
<div class="acc" style="left:410px;top:547px;letter-spacing:-0.092px">Ctrl-E</div>
<div class="sep" style="top:564px"></div><div class="sep" style="top:565px;background:#fff"></div>
<div class="mi" style="left:171px;top:571px;letter-spacing:0.153px;">Package Pricing</div>
<div class="mi" style="left:171px;top:592px;letter-spacing:0.165px;">Detail Pricing</div>
<div class="mi" style="left:171px;top:613px;letter-spacing:0.156px;">Update all Sub Orders</div>
<div class="a" style="left:165px;top:630px;width:285px;height:21px;background:#FDB068;border:2px solid #C00000"></div>
<div class="mi" style="left:171px;top:634px;letter-spacing:0.138px;color:#000">Generate Lost and Repair Invoices</div>
<div class="mi" style="left:171px;top:655px;letter-spacing:0.101px;">Force Reserve</div>
<div class="mi" style="left:171px;top:676px;letter-spacing:0.285px;">Suspend Billing</div>
<div class="arr" style="top:678px"></div>
<div class="mi" style="left:171px;top:697px;letter-spacing:0.355px;">Resume Billing</div>
<div class="arr" style="top:699px"></div>
<div class="mi" style="left:171px;top:718px;letter-spacing:0.193px;">Update Department</div>
<div class="arr" style="top:720px"></div>
<div class="mi" style="left:171px;top:739px;letter-spacing:0.157px;">Unlock All Locked Lines</div>
</body></html>
